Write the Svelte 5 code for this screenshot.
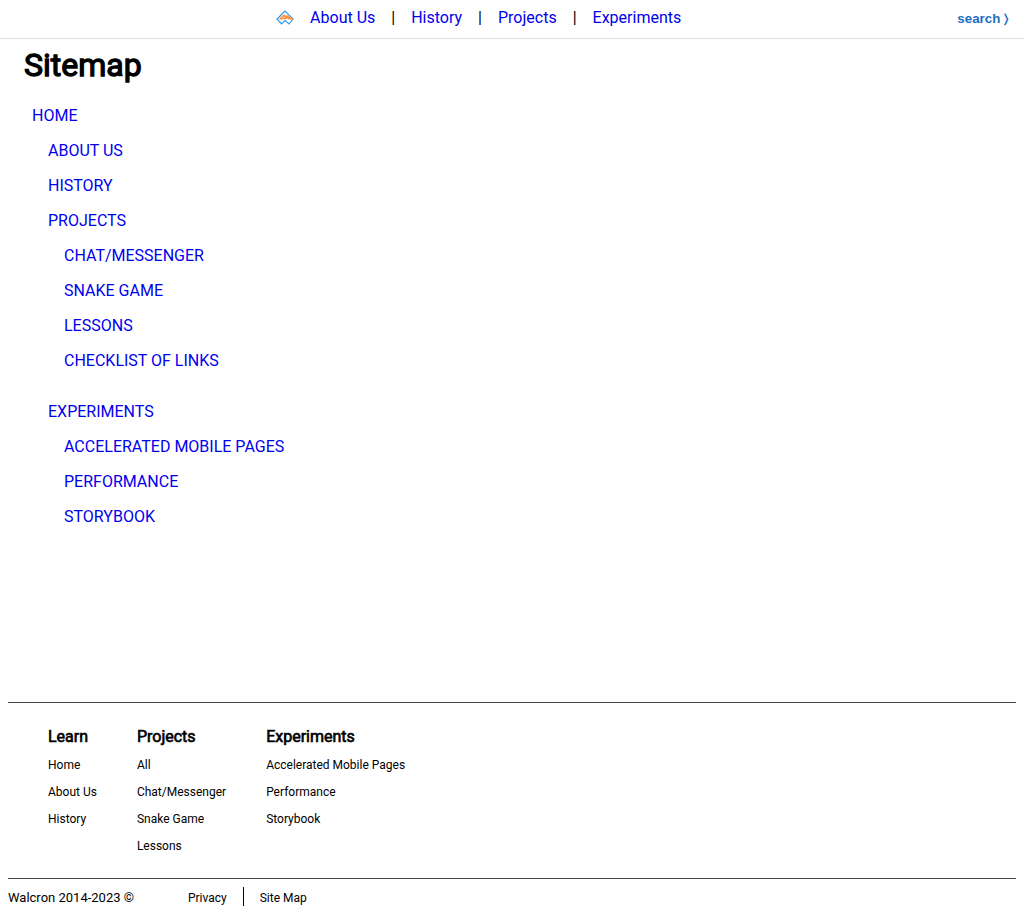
<script>
  const nav = ['About Us', 'History', 'Projects', 'Experiments'];

  const sitemap = [
    { label: 'About Us' },
    { label: 'History' },
    { label: 'Projects', children: ['Chat/Messenger', 'Snake Game', 'Lessons', 'Checklist of Links'] },
    { label: 'Experiments', children: ['Accelerated Mobile Pages', 'Performance', 'Storybook'] }
  ];

  const columns = [
    { title: 'Learn', links: ['Home', 'About Us', 'History'] },
    { title: 'Projects', links: ['All', 'Chat/Messenger', 'Snake Game', 'Lessons'] },
    { title: 'Experiments', links: ['Accelerated Mobile Pages', 'Performance', 'Storybook'] }
  ];
</script>

<div class="page">
  <header>
    <nav>
      <a class="logo" href="#home" aria-label="Home">
        <svg width="18" height="16" viewBox="0 0 18 16" fill="none">
          <path d="M9 1 L1 9 L5.5 14 L9.1 10.6 L13 14 L17 9 Z" stroke="#2f9bf0" stroke-width="1.2" />
          <path d="M3 9 L5.2 6.4 L8 4.4 L9.5 5.4 L12 5.6 L14 7.4 L17.6 8 L17.4 9.6 L13.5 9.4 L11 8.8 L9 9.6 L7 9 L5 9.8 Z" fill="#ff8a34" />
          <path d="M5 8.5 L7.5 6 M7.5 8.6 L9 6.6 M10.5 7.4 L12 8.6" stroke="#ffe0c6" stroke-width="0.7" />
        </svg>
      </a>
      {#each nav as item, i}
        {#if i > 0}<span class="bar">|</span>{/if}
        <a href="#{item}">{item}</a>
      {/each}
    </nav>
    <button type="button">search &#x232A;</button>
  </header>

  <main>
    <h1>Sitemap</h1>
    <ul class="tree">
      <li>
        <a href="#home">Home</a>
        <ul>
          {#each sitemap as entry}
            <li>
              <a href="#{entry.label}">{entry.label}</a>
              {#if entry.children}
                <ul class="leaves">
                  {#each entry.children as child}
                    <li><a href="#{child}">{child}</a></li>
                  {/each}
                </ul>
              {/if}
            </li>
          {/each}
        </ul>
      </li>
    </ul>
  </main>

  <footer>
    <div class="columns">
      {#each columns as column}
        <section>
          <h2>{column.title}</h2>
          <ul>
            {#each column.links as link}
              <li><a href="#{link}">{link}</a></li>
            {/each}
          </ul>
        </section>
      {/each}
    </div>
    <div class="legal">
      <span class="copyright">Walcron 2014-2023 ©</span>
      <a href="#privacy">Privacy</a>
      <a href="#sitemap">Site Map</a>
    </div>
  </footer>
</div>

<style>
  :global(body) {
    margin: 0;
    background: #fff;
  }

  .page {
    display: flex;
    flex-direction: column;
    min-height: 100vh;
    box-sizing: border-box;
    padding-bottom: 16px;
    font-family: Roboto, sans-serif;
    font-size: 16px;
    line-height: 19px;
    color: #000;
  }

  a {
    color: #0000ee;
    text-decoration: none;
  }

  ul {
    list-style: none;
    margin: 0;
    padding: 0;
  }

  header {
    display: flex;
    align-items: flex-start;
    padding: 8px 0 10px;
    border-bottom: 1px solid #e0e0e0;
  }

  nav {
    display: flex;
    flex: 1;
    flex-wrap: wrap;
    justify-content: center;
    gap: 16px;
  }

  .logo svg {
    display: block;
    margin-top: 2px;
  }

  button {
    margin: 0;
    padding: 1px 16px 0 0;
    border: 0;
    background: none;
    color: #1b6ec2;
    font-family: "Liberation Sans", "DejaVu Sans", sans-serif;
    font-weight: bold;
    line-height: 19px;
    cursor: pointer;
  }

  h1,
  h2 {
    font-weight: 400;
    -webkit-text-stroke: 0.04em currentColor;
  }

  main {
    flex: 1;
    padding: 7px 24px;
  }

  h1 {
    margin: 0;
    font-size: 32px;
    line-height: 38px;
  }

  .tree {
    padding: 14px 8px 0;
    text-transform: uppercase;
  }

  .tree a {
    display: inline-block;
    padding: 8px 0;
    vertical-align: top;
  }

  .tree ul {
    padding-left: 16px;
  }

  .tree .leaves {
    padding-bottom: 16px;
  }

  footer {
    padding: 0 8px;
    font-size: 12px;
  }

  footer a {
    color: #000;
  }

  .columns {
    display: flex;
    flex-wrap: wrap;
    gap: 40px;
    padding: 24px 40px 18px;
    border: 1px solid #444;
    border-width: 1px 0;
  }

  h2 {
    margin: 0 0 6px;
    font-size: 16px;
    line-height: 19px;
  }

  .columns li {
    padding: 4px 0;
  }

  .legal {
    display: flex;
    padding-top: 8px;
    line-height: 16px;
  }

  .copyright {
    margin-right: 38px;
    padding-top: 3px;
    font-size: 13px;
  }

  .legal a {
    padding: 3px 16px 0;
  }

  .legal a + a {
    border-left: 1px solid #000;
  }
</style>
